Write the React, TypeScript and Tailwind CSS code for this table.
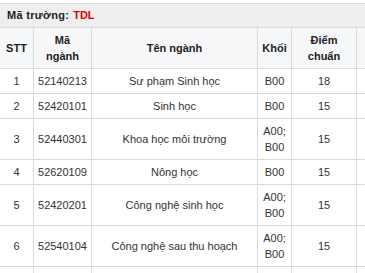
import React from 'react';

const rows = [
  { stt: '1', code: '52140213', name: 'Sư phạm Sinh học', khoi: ['B00'], diem: '18' },
  { stt: '2', code: '52420101', name: 'Sinh học', khoi: ['B00'], diem: '15' },
  { stt: '3', code: '52440301', name: 'Khoa học môi trường', khoi: ['A00;', 'B00'], diem: '15' },
  { stt: '4', code: '52620109', name: 'Nông học', khoi: ['B00'], diem: '15' },
  { stt: '5', code: '52420201', name: 'Công nghệ sinh học', khoi: ['A00;', 'B00'], diem: '15' },
  { stt: '6', code: '52540104', name: 'Công nghệ sau thu hoạch', khoi: ['A00;', 'B00'], diem: '15' },
];

const cell = 'flex items-center justify-center text-center border-r border-b border-[#dadada] py-1 leading-4';
const head = `${cell} h-[41px] bg-[#f6f7f9] font-bold text-[#222]`;

const App: React.FC = () => {
  return (
    <div className="w-[365px] h-[273px] overflow-hidden bg-white pt-[3px] text-[11px] text-[#333] [font-family:'Liberation_Sans',Arial,sans-serif]">
      <div className="w-[440px]">
        {/* Mã trường */}
        <div className="h-[25px] bg-[#eeeeee] border-t border-b border-[#dadada] pl-[7px] flex items-center font-bold text-[#222]">
          <span className="tracking-[0.3px]">Mã trường:</span>
          <span className="ml-1 text-[#e00000]">TDL</span>
        </div>

        <div className="grid grid-cols-[34px_58px_166px_34px_65px_83px]">
          <div className={head}>STT</div>
          <div className={head}>Mã<br />ngành</div>
          <div className={head}>Tên ngành</div>
          <div className={head}>Khối</div>
          <div className={head}>Điểm<br />chuẩn</div>
          <div className={head}></div>

          {rows.map((r) => (
            <React.Fragment key={r.stt}>
              <div className={cell}>{r.stt}</div>
              <div className={cell}>{r.code}</div>
              <div className={cell}>{r.name}</div>
              <div className={`${cell} flex-col`}>
                {r.khoi.map((k) => (
                  <span key={k}>{k}</span>
                ))}
              </div>
              <div className={cell}>{r.diem}</div>
              <div className={cell}></div>
            </React.Fragment>
          ))}

          {/* next row, below the fold */}
          <div className={`${cell} h-[25px]`}></div>
          <div className={`${cell} h-[25px]`}></div>
          <div className={`${cell} h-[25px]`}></div>
          <div className={`${cell} h-[25px]`}></div>
          <div className={`${cell} h-[25px]`}></div>
          <div className={`${cell} h-[25px]`}></div>
        </div>
      </div>
    </div>
  );
};

export default App;
